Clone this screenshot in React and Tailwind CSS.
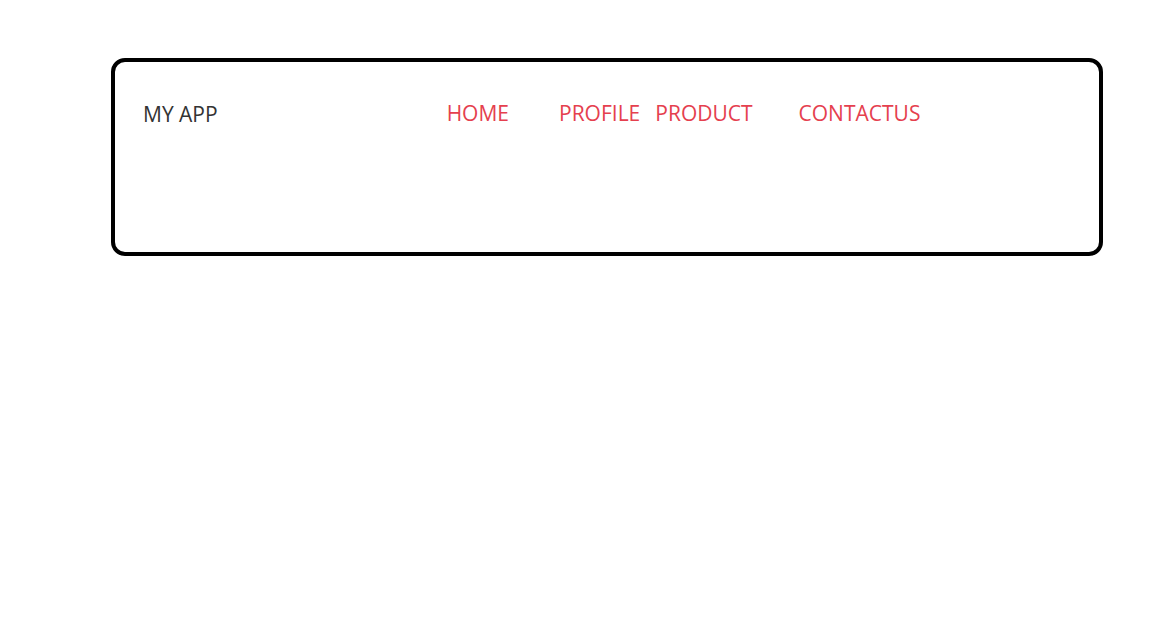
import React from 'react';

const links = [
  { label: 'HOME', className: 'ml-[229px]' },
  { label: 'PROFILE', className: 'ml-[50px]' },
  { label: 'PRODUCT', className: 'ml-[15px]' },
  { label: 'CONTACTUS', className: 'ml-[46px]' },
];

const App = () => {
  return (
    <div className="min-h-screen bg-white pt-[58px] pl-[111px]" style={{ fontFamily: "'Open Sans', sans-serif" }}>
      <nav className="w-[992px] h-[198px] border-4 border-black rounded-[14px]">
        <div className="flex items-center pl-[28px] pt-[38px]">
          <span className="text-[21px] leading-[26px] text-[#333333]">MY APP</span>
          <ul className="flex items-center">
            {links.map((link) => (
              <li key={link.label} className={link.className}>
                <a href="#" className="text-[21px] leading-[26px] text-[#e5404e]">
                  {link.label}
                </a>
              </li>
            ))}
          </ul>
        </div>
      </nav>
    </div>
  );
};

export default App;
